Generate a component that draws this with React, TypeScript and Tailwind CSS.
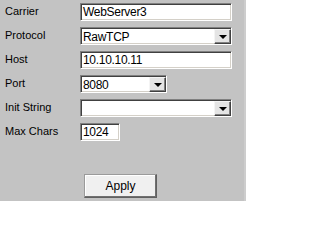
const sunken =
  "box-border border border-t-[#808080] border-l-[#808080] border-b-white border-r-white bg-white shadow-[inset_1px_1px_0_#404040,inset_-1px_-1px_0_#d4d0c8]";

const TextField = ({ value, width }: { value: string; width: string }) => (
  <div className={`${sunken} ${width} h-[18px] flex items-center pl-[2px] text-[12px] tracking-[-0.3px] text-black`}>
    {value}
  </div>
);

const Combo = ({ value, width }: { value: string; width: string }) => (
  <div className={`${sunken} ${width} h-[18px] flex items-stretch pl-[2px] pt-[1px] text-[12px] tracking-[-0.3px] text-black`}>
    <span className="flex-1 flex items-center">{value}</span>
    <div className="box-border w-[17px] h-[15px] flex items-center justify-center bg-[#e4e4e4] border border-t-[#f4f4f4] border-l-[#f4f4f4] border-b-[#404040] border-r-[#404040] shadow-[inset_-1px_-1px_0_#808080]">
      <svg width="8" height="4" viewBox="0 0 8 4">
        <path d="M0 0h8L4 4z" fill="#000" />
      </svg>
    </div>
  </div>
);

const Row = ({ label, children }: { label: string; children: React.ReactNode }) => (
  <div className="flex items-center h-[18px]">
    <span className="w-[80px] pl-[5px] -mt-[2px] text-[11px] text-black">{label}</span>
    {children}
  </div>
);

export default function App() {
  return (
    <div
      className="w-[246px] h-[201px] bg-[#c3c3c3] border-r-[2px] border-[#cdcdcd] box-border pt-[3px]"
      style={{ fontFamily: '"Liberation Sans", Arial, sans-serif' }}
    >
      <div className="flex flex-col gap-[6px]">
        <Row label="Carrier">
          <TextField value="WebServer3" width="w-[152px]" />
        </Row>
        <Row label="Protocol">
          <Combo value="RawTCP" width="w-[152px]" />
        </Row>
        <Row label="Host">
          <TextField value="10.10.10.11" width="w-[152px]" />
        </Row>
        <Row label="Port">
          <Combo value="8080" width="w-[87px]" />
        </Row>
        <Row label="Init String">
          <Combo value="" width="w-[152px]" />
        </Row>
        <Row label="Max Chars">
          <TextField value="1024" width="w-[40px]" />
        </Row>
      </div>
      <div className="pl-[84px] mt-[33px]">
        <button className="box-border w-[73px] h-[24px] bg-[#f0f0f0] border border-[#9a9a9a] border-b-[#606060] border-r-[#606060] shadow-[inset_-1px_-1px_0_#707070,inset_1px_1px_0_#ffffff] text-[12px] text-black flex items-center justify-center">
          Apply
        </button>
      </div>
    </div>
  );
}
